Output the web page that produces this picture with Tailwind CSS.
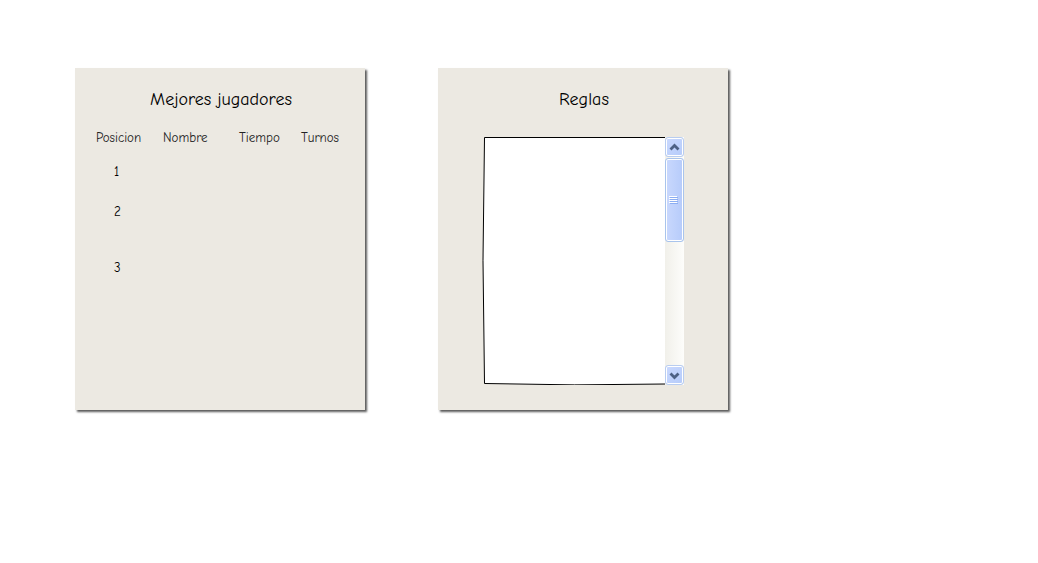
<!DOCTYPE html>
<html lang="es">
<head>
<meta charset="utf-8">
<meta name="viewport" content="width=device-width, initial-scale=1">
<title>Mejores jugadores</title>
<script src="https://cdn.jsdelivr.net/npm/@tailwindcss/browser@4"></script>
</head>
<body class="bg-white font-['Comic_Sans_MS','Comic_Neue','Open_Sans',sans-serif] text-black">
<main class="flex items-stretch gap-[73px] px-[75px] pt-[68px] pb-8">
  <section class="w-full max-w-[290px] bg-[#ece9e2] pt-5 pb-10 shadow-[2px_2px_2px_rgba(0,0,0,0.65)]">
    <h1 class="pl-0.5 text-center text-lg leading-6">Mejores jugadores</h1>
    <table class="mt-4 ml-[21px] table-fixed text-left text-[13px]">
      <thead>
        <tr class="h-5 text-[#222]">
          <th scope="col" class="w-[67px] p-0 font-normal">Posicion</th>
          <th scope="col" class="w-[76px] p-0 font-normal">Nombre</th>
          <th scope="col" class="w-[62px] p-0 font-normal">Tiempo</th>
          <th scope="col" class="p-0 font-normal">Turnos</th>
        </tr>
      </thead>
      <tbody>
        <tr class="h-12"><td class="p-0 pl-[18px]">1</td><td></td><td></td><td></td></tr>
        <tr class="h-8"><td class="p-0 pl-[18px]">2</td><td></td><td></td><td></td></tr>
        <tr class="h-20"><td class="p-0 pl-[18px]">3</td><td></td><td></td><td></td></tr>
      </tbody>
    </table>
  </section>

  <section class="w-full max-w-[290px] bg-[#ece9e2] pt-5 pb-[25px] shadow-[2px_2px_2px_rgba(0,0,0,0.65)]">
    <h2 class="pl-0.5 text-center text-lg leading-6"><label for="reglas">Reglas</label></h2>
    <div class="mt-[25px] mr-11 ml-11 flex h-[248px]">
      <div class="relative min-w-0 flex-1">
        <svg class="absolute inset-0 h-full w-full" viewBox="0 0 183 248" preserveAspectRatio="none" fill="none" aria-hidden="true">
          <path d="M183 .5H2.500Q-.5 124 2.500 246.500Q92 249 183 247V.5" fill="#fff"/>
          <path d="M183 .5H2.500Q-.5 124 2.500 246.500Q92 249 183 247" stroke="#000"/>
        </svg>
        <textarea id="reglas" readonly class="relative block h-full w-full resize-none bg-transparent p-2 text-xs outline-none"></textarea>
      </div>
      <div class="flex w-[19px] flex-col bg-linear-to-r from-[#f1f0ea] to-[#fdfdfb]">
        <button type="button" aria-label="Subir" class="flex h-5 w-full items-center justify-center rounded-[3px] border border-[#b9cdf0] bg-linear-to-br from-[#cad9fe] to-[#b5cbfa] shadow-[inset_0_0_0_1px_#fff]">
          <svg class="h-[9px] w-[11px]" viewBox="0 0 11 9" fill="none" stroke="#4d6185" stroke-width="2.800" aria-hidden="true"><path d="M1.500 6.500L5.500 2.500L9.500 6.500"/></svg>
        </button>
        <button type="button" aria-label="Desplazar" class="mt-px flex h-[84px] w-full items-center justify-center rounded-[3px] border border-[#a9c4ec] bg-linear-to-r from-[#c9d8fd] to-[#b6cbfa] pr-0.5 shadow-[inset_0_0_0_1px_#fff]">
          <svg class="h-2 w-[9px]" viewBox="0 0 9 8" shape-rendering="crispEdges" aria-hidden="true"><path d="M0 .5H8M0 2.500H8M0 4.500H8M0 6.500H8" stroke="#fff"/><path d="M1 1.500H9M1 3.500H9M1 5.500H9M1 7.500H9" stroke="#8caef2"/></svg>
        </button>
        <button type="button" aria-label="Bajar" class="mt-auto flex h-5 w-full items-center justify-center rounded-[3px] border border-[#b9cdf0] bg-linear-to-br from-[#cad9fe] to-[#b5cbfa] shadow-[inset_0_0_0_1px_#fff]">
          <svg class="h-[9px] w-[11px]" viewBox="0 0 11 9" fill="none" stroke="#4d6185" stroke-width="2.800" aria-hidden="true"><path d="M1.500 2.500L5.500 6.500L9.500 2.500"/></svg>
        </button>
      </div>
    </div>
  </section>
</main>
</body>
</html>
